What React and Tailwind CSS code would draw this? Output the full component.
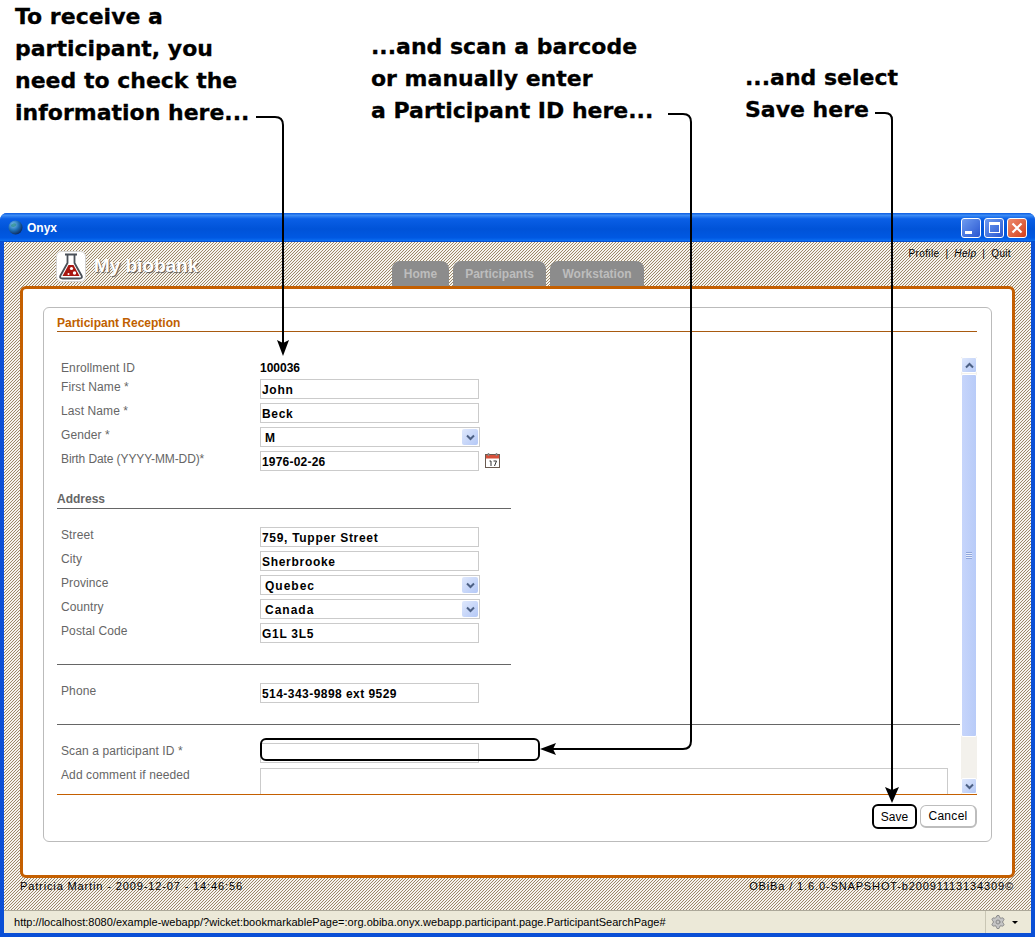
import React from 'react';
import { Settings } from 'lucide-react';

const hatch = 'bg-[linear-gradient(135deg,#f6f4ee_42%,#9c8868_42%,#9c8868_58%,#f6f4ee_58%)] bg-[length:3px_3px]';
const sans = "font-['Liberation_Sans',Arial,sans-serif]";

const TextField = ({ value, className = 'tracking-[0.7px]' }) => (
  <div className={`w-[219px] h-[20px] border border-[#cbcbcb] bg-white pl-[1px] text-[12px] leading-[20px] font-bold text-black whitespace-nowrap overflow-hidden ${className}`}>
    {value}
  </div>
);

const SelectField = ({ value }) => (
  <div className="w-[220px] h-[20px] border border-[#cbcbcb] bg-white pl-[4px] pr-[1px] flex items-center justify-between text-[12px] font-bold tracking-[1px] text-black">
    <span className="pt-[1px]">{value}</span>
    <span className="w-[16px] h-[16px] rounded-[2px] bg-gradient-to-br from-[#dfe8fc] to-[#b4c8f6] flex items-center justify-center">
      <Chevron down />
    </span>
  </div>
);

const Chevron = ({ down }) => (
  <svg width="9" height="7" viewBox="0 0 9 7" className={down ? '' : 'rotate-180'}>
    <path d="M1 1.5l3.5 3.5L8 1.5" fill="none" stroke="#4d6185" strokeWidth="2" />
  </svg>
);

const Row = ({ label, children, className = '', labelClass = 'tracking-[0.1px]' }) => (
  <div className={`flex h-[20px] ${className}`}>
    <div className={`w-[203px] pl-[4px] pt-[1px] text-[12px] leading-[14px] text-[#666] whitespace-nowrap ${labelClass}`}>{label}</div>
    {children}
  </div>
);

const Flask = () => (
  <svg width="30" height="31" viewBox="0 0 30 31">
    <rect x="0.5" y="0.5" width="29" height="30" rx="5" fill="#fff" stroke="#d4d4d4" />
    <path d="M9 3.5h12M11.5 3.5v8.5L4.5 24.5c-1 2 0 3 2 3h17c2 0 3-1 2-3L18.5 12V3.5" fill="none" stroke="#4a5058" strokeWidth="1.8" />
    <path d="M12.5 14h5l6 11H6.5z" fill="#a81610" />
    <circle cx="15.5" cy="17.5" r="1.6" fill="#fff" />
    <circle cx="18.5" cy="22" r="1.7" fill="#fff" />
    <circle cx="12.5" cy="23" r="1" fill="#fff" />
  </svg>
);

const Globe = () => (
  <svg width="15" height="15" viewBox="0 0 15 15">
    <defs>
      <radialGradient id="globe" cx="0.35" cy="0.3" r="0.8">
        <stop offset="0" stopColor="#7fc2ee" />
        <stop offset="0.5" stopColor="#1f6fb5" />
        <stop offset="1" stopColor="#0a1c4a" />
      </radialGradient>
    </defs>
    <circle cx="7.5" cy="7.5" r="7" fill="url(#globe)" />
    <path d="M3 5c2-2 4-2 5-1s-1 3-3 3-2-1-2-2z" fill="#2e8f8a" opacity="0.7" />
  </svg>
);

const Calendar = () => (
  <svg width="17" height="17" viewBox="0 0 17 17" className="ml-[5px] mt-[1px]">
    <rect x="1.5" y="2.5" width="14" height="13" fill="#fff" stroke="#6a5a50" />
    <rect x="2" y="3" width="13" height="3.5" fill="#d8503a" />
    <path d="M4.5 1v3M12.5 1v3" stroke="#8a8a8a" strokeWidth="1.5" />
    <path d="M5.5 9h1.5v5M9.5 9h3l-2 5" fill="none" stroke="#333" />
  </svg>
);

const WinButton = ({ className, children }) => (
  <div className={`w-[20px] h-[20px] rounded-[3px] border border-white flex items-center justify-center ${className}`}>{children}</div>
);

const Overlay = () => (
  <svg width="1035" height="937" viewBox="0 0 1035 937" className="absolute top-0 left-0 pointer-events-none">
    <g fill="none" stroke="#000" strokeWidth="2">
      <path d="M256 117h19q8 0 8 8v218" />
      <path d="M668 114h15q8 0 8 8v619q0 8-8 8H552" />
      <path d="M875 113h10q7 0 7 7v672" />
      <rect x="261" y="739" width="278" height="21" rx="5" />
    </g>
    <path d="M283 356l-6-16 6 3 6-3z" fill="#000" />
    <path d="M540 749l16-6-3 6 3 6z" fill="#000" />
    <path d="M892 803l-7-16 7 3 7-3z" fill="#000" />
  </svg>
);

const Callout = ({ className, lines }) => (
  <div className={`absolute font-['DejaVu_Sans',sans-serif] font-bold text-[22px] leading-[32px] text-black whitespace-nowrap [-webkit-text-stroke:0.3px_black] ${className}`}>
    {lines.map((line) => (
      <div key={line}>{line}</div>
    ))}
  </div>
);

export default function App() {
  return (
    <div className={`relative w-[1035px] h-[937px] bg-white overflow-hidden ${sans}`}>
      {/* Annotations above the window */}
      <div className="h-[213px]">
        <Callout className="left-[15px] top-[1px]" lines={['To receive a', 'participant, you', 'need to check the', 'information here...']} />
        <Callout className="left-[371px] top-[31px]" lines={['...and scan a barcode', 'or manually enter', 'a Participant ID here...']} />
        <Callout className="left-[745px] top-[62px]" lines={['...and select', 'Save here']} />
      </div>

      {/* Browser window */}
      <div className="h-[724px] flex flex-col rounded-t-[7px] bg-[#0a4fd6]">
        <div className="h-[29px] rounded-t-[7px] flex items-center pl-[8px] pr-[8px] bg-[linear-gradient(180deg,#0a5ae0_0,#3d8cf5_8%,#0a5fe6_20%,#0053d8_55%,#0058e2_85%,#0a6cf0_95%,#0040c0_100%)]">
          <Globe />
          <span className="ml-[4px] text-[12px] font-bold text-white">Onyx</span>
          <div className="ml-auto flex gap-[3px]">
            <WinButton className="bg-gradient-to-br from-[#6f9bf0] to-[#2a55d0] items-end pb-[3px] pr-[6px]">
              <span className="w-[7px] h-[3px] bg-white" />
            </WinButton>
            <WinButton className="bg-gradient-to-br from-[#6f9bf0] to-[#2a55d0]">
              <span className="w-[11px] h-[11px] border border-white border-t-[3px]" />
            </WinButton>
            <WinButton className="bg-gradient-to-br from-[#ec8a6c] to-[#d43c14]">
              <svg width="12" height="12" viewBox="0 0 12 12">
                <path d="M1.5 1.5l9 9M10.5 1.5l-9 9" stroke="#fff" strokeWidth="2.2" />
              </svg>
            </WinButton>
          </div>
        </div>

        <div className={`h-[668px] mx-[4px] ${hatch}`}>
          {/* Page header */}
          <div className="h-[44px] flex">
            <div className="ml-[52px] mt-[9px] h-[31px]">
              <Flask />
            </div>
            <div className="ml-[8px] mt-[12px] w-[298px] text-[19px] leading-[24px] font-bold text-white [text-shadow:1px_1px_1px_#555]">My biobank</div>
            <div className="flex items-end gap-[4px] text-[12px] font-bold text-[#bdbdbd]">
              <div className="w-[57px] h-[25px] rounded-t-[8px] bg-[#8c8c8c] flex items-center justify-center">Home</div>
              <div className="w-[93px] h-[25px] rounded-t-[8px] bg-[#8c8c8c] flex items-center justify-center">Participants</div>
              <div className="w-[94px] h-[25px] rounded-t-[8px] bg-[#8c8c8c] flex items-center justify-center">Workstation</div>
            </div>
            <div className="ml-auto mr-[20px] mt-[6px] flex gap-[6px] text-[10px] leading-[12px] tracking-[0.35px] text-black">
              <span>Profile</span>
              <span>|</span>
              <span className="italic">Help</span>
              <span>|</span>
              <span>Quit</span>
            </div>
          </div>

          {/* Orange page frame */}
          <div className="ml-[16px] w-[995px] h-[592px] border-[3px] border-[#c45f00] rounded-[6px] bg-white pt-[18px] pl-[20px]">
            <div className="w-[949px] h-[535px] border border-[#bbbbbb] rounded-[6px] pl-[13px] pr-[14px]">
              <div className="h-[24px] border-b border-[#a85a10] pt-[8px] text-[12px] leading-[14px] font-bold text-[#c05f00]">Participant Reception</div>

              <div className="h-[463px] border-b border-[#c45f00] overflow-hidden flex">
                <div className="flex-1 pt-[27px]">
                  <div className="flex h-[16px] items-center">
                    <div className="w-[203px] pl-[4px] pt-[1px] text-[12px] text-[#666] tracking-[0.1px]">Enrollment ID</div>
                    <div className="pt-[1px] text-[12px] font-bold text-black">100036</div>
                  </div>
                  <Row label="First Name *" className="mt-[4px]"><TextField value="John" /></Row>
                  <Row label="Last Name *" className="mt-[4px]"><TextField value="Beck" /></Row>
                  <Row label="Gender *" className="mt-[4px]"><SelectField value="M" /></Row>
                  <Row label="Birth Date (YYYY-MM-DD)*" className="mt-[4px]" labelClass="tracking-[-0.1px]">
                    <TextField value="1976-02-26" className="tracking-[0.2px]" />
                    <Calendar />
                  </Row>

                  <div className="mt-[19px] w-[454px] h-[19px] border-b border-[#666] text-[12px] leading-[18px] font-bold text-[#666]">Address</div>

                  <Row label="Street" className="mt-[18px]"><TextField value="759, Tupper Street" /></Row>
                  <Row label="City" className="mt-[4px]"><TextField value="Sherbrooke" /></Row>
                  <Row label="Province" className="mt-[4px]"><SelectField value="Quebec" /></Row>
                  <Row label="Country" className="mt-[4px]"><SelectField value="Canada" /></Row>
                  <Row label="Postal Code" className="mt-[4px]"><TextField value="G1L 3L5" /></Row>

                  <div className="mt-[21px] w-[454px] border-t border-[#666]" />

                  <Row label="Phone" className="mt-[18px]"><TextField value="514-343-9898 ext 9529" className="tracking-[0.45px]" /></Row>

                  <div className="mt-[21px] w-[903px] border-t border-[#666]" />

                  <Row label="Scan a participant ID *" className="mt-[18px]"><TextField value="" /></Row>
                  <div className="mt-[5px] flex">
                    <div className="w-[203px] pl-[4px] text-[12px] leading-[14px] text-[#666] tracking-[0.1px]">Add comment if needed</div>
                    <div className="w-[688px] h-[60px] border border-[#cbcbcb]" />
                  </div>
                </div>

                {/* Scrollbar */}
                <div className="w-[16px] mt-[25px] flex flex-col bg-[#f3f1ec]">
                  <div className="h-[16px] rounded-[2px] bg-gradient-to-br from-[#dfe8fc] to-[#b4c8f6] flex items-center justify-center border border-white">
                    <Chevron />
                  </div>
                  <div className="mt-[1px] h-[363px] rounded-[2px] bg-[linear-gradient(90deg,#c6d5fb,#b8cbf8)] border border-white flex items-center justify-center">
                    <div className="w-[6px] h-[7px] bg-[repeating-linear-gradient(180deg,#8fa6dc_0,#8fa6dc_1px,#e6edfd_1px,#e6edfd_2px)]" />
                  </div>
                  <div className="mt-auto h-[16px] rounded-[2px] bg-gradient-to-br from-[#dfe8fc] to-[#b4c8f6] flex items-center justify-center border border-white">
                    <Chevron down />
                  </div>
                </div>
              </div>

              <div className="mt-[9px] flex justify-end items-center gap-[3px] text-[12px] text-black">
                <div className="w-[45px] h-[25px] rounded-[6px] border-2 border-black flex items-center justify-center bg-white">Save</div>
                <div className="w-[57px] h-[23px] rounded-[6px] border border-[#bdbdbd] border-r-2 border-b-2 flex items-center justify-center tracking-[0.3px]">Cancel</div>
              </div>
            </div>
          </div>

          <div className="ml-[16px] w-[994px] mt-[1px] flex justify-between text-[11px] leading-[14px] tracking-[0.87px] text-black">
            <span>Patricia Martin - 2009-12-07 - 14:46:56</span>
            <span>OBiBa / 1.6.0-SNAPSHOT-b20091113134309©</span>
          </div>
        </div>

        {/* Status bar */}
        <div className="h-[23px] mx-[4px] bg-[#ece9d8] border-t border-[#aca899] flex items-center pl-[10px] text-[11px] text-black">
          <span className="whitespace-nowrap tracking-[0.02px]">http://localhost:8080/example-webapp/?wicket:bookmarkablePage=:org.obiba.onyx.webapp.participant.page.ParticipantSearchPage#</span>
          <div className="ml-auto w-[46px] h-full border-l border-[#c9c6b4] flex items-center pl-[4px]">
            <Settings size={16} fill="#c4c4c4" stroke="#8a8a8a" strokeWidth={1.5} />
            <span className="ml-[6px] w-0 h-0 border-x-[3px] border-x-transparent border-t-[3px] border-t-black" />
          </div>
        </div>
      </div>

      <Overlay />
    </div>
  );
}
